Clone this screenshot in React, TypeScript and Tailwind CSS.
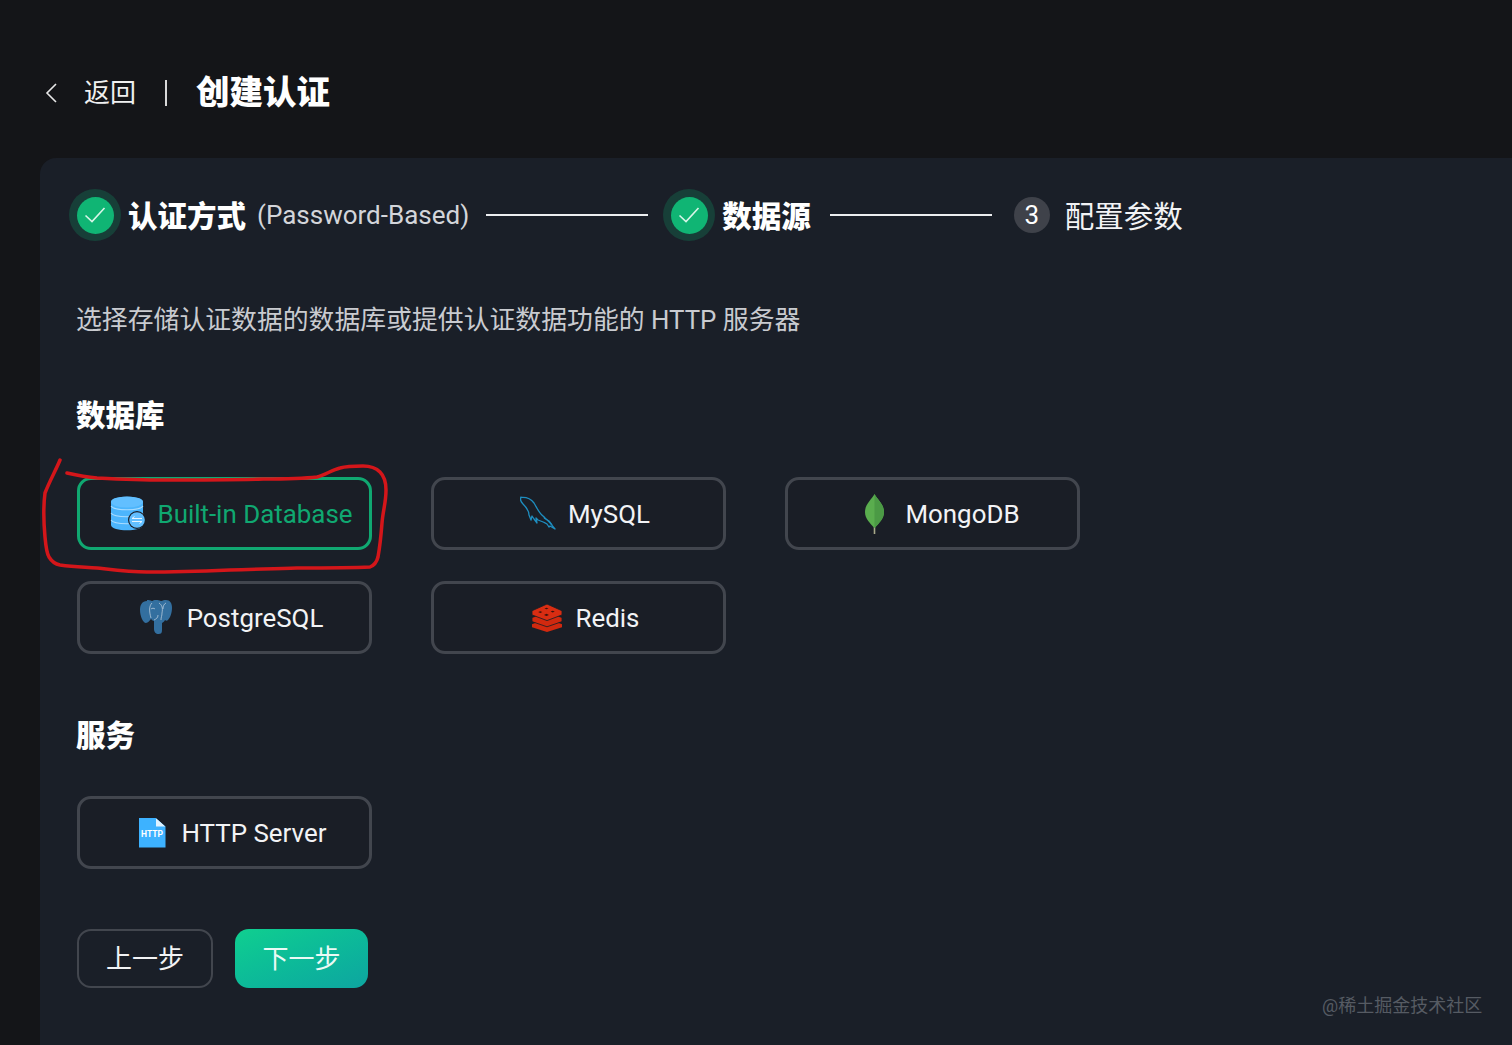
import React from "react";

const FONT = { fontFamily: 'Roboto, "Noto Sans CJK SC", sans-serif' };

function Check() {
  return (
    <div className="flex h-[52px] w-[52px] shrink-0 items-center justify-center rounded-full bg-[#173f38]">
      <div className="flex h-[37px] w-[37px] items-center justify-center rounded-full bg-[#10b574]">
        <svg width="22" height="18" viewBox="0 0 22 18" fill="none" stroke="#d8f5e8" strokeWidth="1.6">
          <path d="M1.5 9.5 L8 15.5 L20.5 2" />
        </svg>
      </div>
    </div>
  );
}

function DbIcon() {
  return (
    <svg width="36" height="35" viewBox="0 0 36 35">
      <path d="M1 6c0-7 32-7 32 0v23c0 7-32 7-32 0z" fill="#4cb5fc" />
      <ellipse cx="17" cy="6" rx="16" ry="5.500" fill="#62bfff" />
      <path d="M1 10c3 5 29 5 32 0M1 17c3 5 29 5 32 0M1 24c3 5 29 5 32 0" stroke="#a9dcff" strokeWidth="1.100" fill="none" />
      <circle cx="27" cy="24" r="9" fill="#1a1e26" />
      <circle cx="27" cy="24" r="7.800" fill="#62bfff" />
      <path d="M22 22.500h10M24.500 20.500l-2.500 2M22 25.500h10M29.500 27.500l2.500-2" stroke="#e6f5ff" strokeWidth="1" fill="none" />
    </svg>
  );
}

function Dolphin() {
  return (
    <svg width="36" height="36" viewBox="0 0 36 36" fill="none" stroke="#1e8ec0" strokeWidth="1.300" strokeLinejoin="round">
      <path d="M1 1.500C6 1 11 3 14 7c3 5 5 10 9 13 3 3 7 6 12 13l-5-3-1 1-2-3c-3-2-6-3-9-4l-2-2 1 5-3-4-2-3-1 4-2-5c0-4-2-7-6-11-2-2-3-5-2-7z" />
      <path d="M24 22l5 3 3 4" />
    </svg>
  );
}

function Elephant() {
  return (
    <svg width="34" height="35" viewBox="0 0 34 35">
      <path d="M8 1C3 1 1 5 1 10c0 6 3 13 6 13 2 0 4-3 5-4 1 1 2 2 3 2v8c0 3 2 5 4.500 5s3.500-1 3.500-4v-7c1-1 2-1 3-3 1 1 2 1 3 0 2-2 4-7 4-12 0-5-2-8-6-8-2 0-3 .5-5 1-2-1-3-1-5-1-2 0-3 .5-4 1-2-1-3-1-5-1z" fill="#336f9f" />
      <path d="M13 3c-3 3-3 8-1 15M20 3c3 2 4 5 3 10 0 3-1 4-1 7M27 3c-2 1-3 3-3 6M15 20c2-1 4-2 4-5M12 9c1-1 3-1 4 0" stroke="#c7d6e2" strokeWidth="0.700" fill="none" />
    </svg>
  );
}

function Leaf() {
  return (
    <svg width="21" height="42" viewBox="0 0 21 42">
      <path d="M10.500 41V30" stroke="#a8a98a" strokeWidth="1.600" />
      <path d="M10.500 1C8 6 1 11 1 19c0 7 5 11 9.500 16 4.500-5 9.500-9 9.500-16 0-8-7-13-9.500-18z" fill="#5aad4e" />
      <path d="M10.500 1c2.500 5 9.500 10 9.500 18 0 7-5 11-9.500 16z" fill="#4b9a45" />
    </svg>
  );
}

function RedisIcon() {
  return (
    <svg width="30" height="28" viewBox="0 0 29 27">
      <path d="M0 19.500 14.500 14 29 19.500v3L14.500 27 0 22.500z" fill="#d1290f" />
      <path d="M0 13 14.500 8 29 13v4L14.500 22 0 17z" fill="#d1290f" stroke="#1a1e26" strokeWidth="0.800" />
      <path d="M0 6.500 14.500 0 29 6.500v4L14.500 16 0 10.500z" fill="#d92d12" stroke="#1a1e26" strokeWidth="0.800" />
      <path d="M14 3.500l2 .8-2 .8-2-.8zM20 6.500l2 .8-2 .8-2-.8zM8 7l2 .8-2 .8-2-.8zM14 9.500l2.400 1-2.400 1-2.400-1z" fill="#3b130c" />
    </svg>
  );
}

function HttpIcon() {
  return (
    <div className="relative h-[30px] w-[27px] bg-[#3db2ff] [clip-path:polygon(0_0,62%_0,100%_30%,100%_100%,0_100%)]">
      <div className="absolute right-0 top-0 h-[9px] w-[10px] bg-[#dff2ff] [clip-path:polygon(0_0,100%_100%,0_100%)]" />
      <span className="absolute left-0 right-0 top-[11px] text-center text-[8.500px] font-bold leading-[10px] text-white">HTTP</span>
    </div>
  );
}

function Opt({ icon, label, active, gap, pad = "pl-[13px]" }: { icon: React.ReactNode; label: string; active?: boolean; gap: string; pad?: string }) {
  return (
    <div
      className={`flex h-[73px] w-[295px] items-center justify-center rounded-[14px] border-[3px] bg-[#1a1e26] text-[25.900px] ${pad} ${gap} ${
        active ? "border-[#10a871] text-[#10a871]" : "border-[#42464e] text-[#f2f3f5]"
      }`}
    >
      {icon}
      <span className="mt-[2px]">{label}</span>
    </div>
  );
}

export default function App() {
  return (
    <div style={FONT} className="h-[1045px] w-[1512px] overflow-hidden bg-[#141518] text-white">
      <div className="flex h-[158px] items-start pl-[44px] pt-[73px]">
        <div className="flex h-[40px] items-center">
          <svg width="16" height="22" viewBox="0 0 16 22" fill="none" stroke="#e8e8e8" strokeWidth="1.600">
            <path d="M12 2 3 11l9 9" />
          </svg>
          <span className="ml-[24px] text-[26px] text-[#f0f0f0]">返回</span>
          <div className="ml-[29px] h-[26px] w-[2px] bg-[#d8d8d8]" />
          <span className="ml-[29px] text-[33.500px] font-black">创建认证</span>
        </div>
      </div>

      <div className="relative ml-[40px] h-[887px] rounded-tl-[16px] bg-[#1a1f28] pl-[37px] pt-[31px]">
        <div className="-ml-[8px] flex h-[52px] items-center">
          <Check />
          <span className="ml-[7px] mt-[4px] text-[29.500px] font-black">认证方式</span>
          <span className="ml-[11px] text-[26px] text-[#d3d5da]">(Password-Based)</span>
          <div className="ml-[17px] h-[2px] w-[162px] bg-[#eceef0]" />
          <div className="ml-[15px]">
            <Check />
          </div>
          <span className="ml-[7px] mt-[4px] text-[29.500px] font-black">数据源</span>
          <div className="ml-[19px] h-[2px] w-[162px] bg-[#eceef0]" />
          <div className="ml-[22px] flex h-[36px] w-[36px] items-center justify-center rounded-full bg-[#3f424a] text-[26px]">3</div>
          <span className="ml-[15px] mt-[4px] text-[29.500px] text-[#f2f3f5]">配置参数</span>
        </div>

        <p className="-ml-[1px] mt-[59px] h-[40px] text-[25.850px] leading-[40px] text-[#c9cbd0]">选择存储认证数据的数据库或提供认证数据功能的 HTTP 服务器</p>

        <h2 className="-ml-[1px] mt-[56px] h-[40px] text-[29.500px] font-black leading-[40px]">数据库</h2>

        <div className="mt-[41px] grid w-[1003px] grid-cols-[295px_295px_295px] gap-x-[59px] gap-y-[31px]">
          <Opt active gap="gap-[12px]" icon={<DbIcon />} label="Built-in Database" />
          <Opt gap="gap-[12px]" icon={<Dolphin />} label="MySQL" />
          <Opt gap="gap-[20px]" pad="pl-[19px]" icon={<Leaf />} label="MongoDB" />
          <Opt gap="gap-[14px]" icon={<Elephant />} label="PostgreSQL" />
          <Opt gap="gap-[14px]" pad="pl-[14px]" icon={<RedisIcon />} label="Redis" />
        </div>

        <h2 className="-ml-[1px] mt-[62px] h-[40px] text-[29.500px] font-black leading-[40px]">服务</h2>

        <div className="mt-[40px]">
          <Opt gap="gap-[16px]" pad="pl-[16px]" icon={<HttpIcon />} label="HTTP Server" />
        </div>

        <div className="mt-[60px] flex gap-[22px]">
          <button className="h-[59px] w-[136px] rounded-[14px] border-2 border-[#42464e] pt-[2px] text-[26px] text-[#f2f3f5]">上一步</button>
          <button className="h-[59px] w-[133px] rounded-[14px] bg-gradient-to-br from-[#10cf8f] to-[#0ea5a0] pt-[2px] text-[26px] text-[#eafaf5]">下一步</button>
        </div>

        <svg className="pointer-events-none absolute left-0 top-[290px]" width="360" height="130" viewBox="0 0 360 130" fill="none" stroke="#d4161a" strokeWidth="3.500" strokeLinecap="round">
          <path d="M20 12C16 22 10 32 5 45C3 60 4 78 5 89C6 100 7 106 9 109C12 114 15 116 20 117C35 119 45 119 57 120C75 122 90 124 107 124C135 124 165 123 190 122C215 121 235 121 257 120C285 120 310 120 330 119C335 117 337 113 338 109C340 98 341 88 342 75C343 62 346 55 346 42C346 34 344 28 340 24C336 20 330 18 323 18C315 18 307 18 300 20C292 22 285 27 277 29C260 31 240 31 223 31C190 32 155 32 123 32C100 32 78 31 57 30C46 29 36 27 27 25" />
        </svg>

        <span className="absolute left-[1282px] top-[836px] text-[18px] leading-[24px] text-[#565b63]">@稀土掘金技术社区</span>
      </div>
    </div>
  );
}
